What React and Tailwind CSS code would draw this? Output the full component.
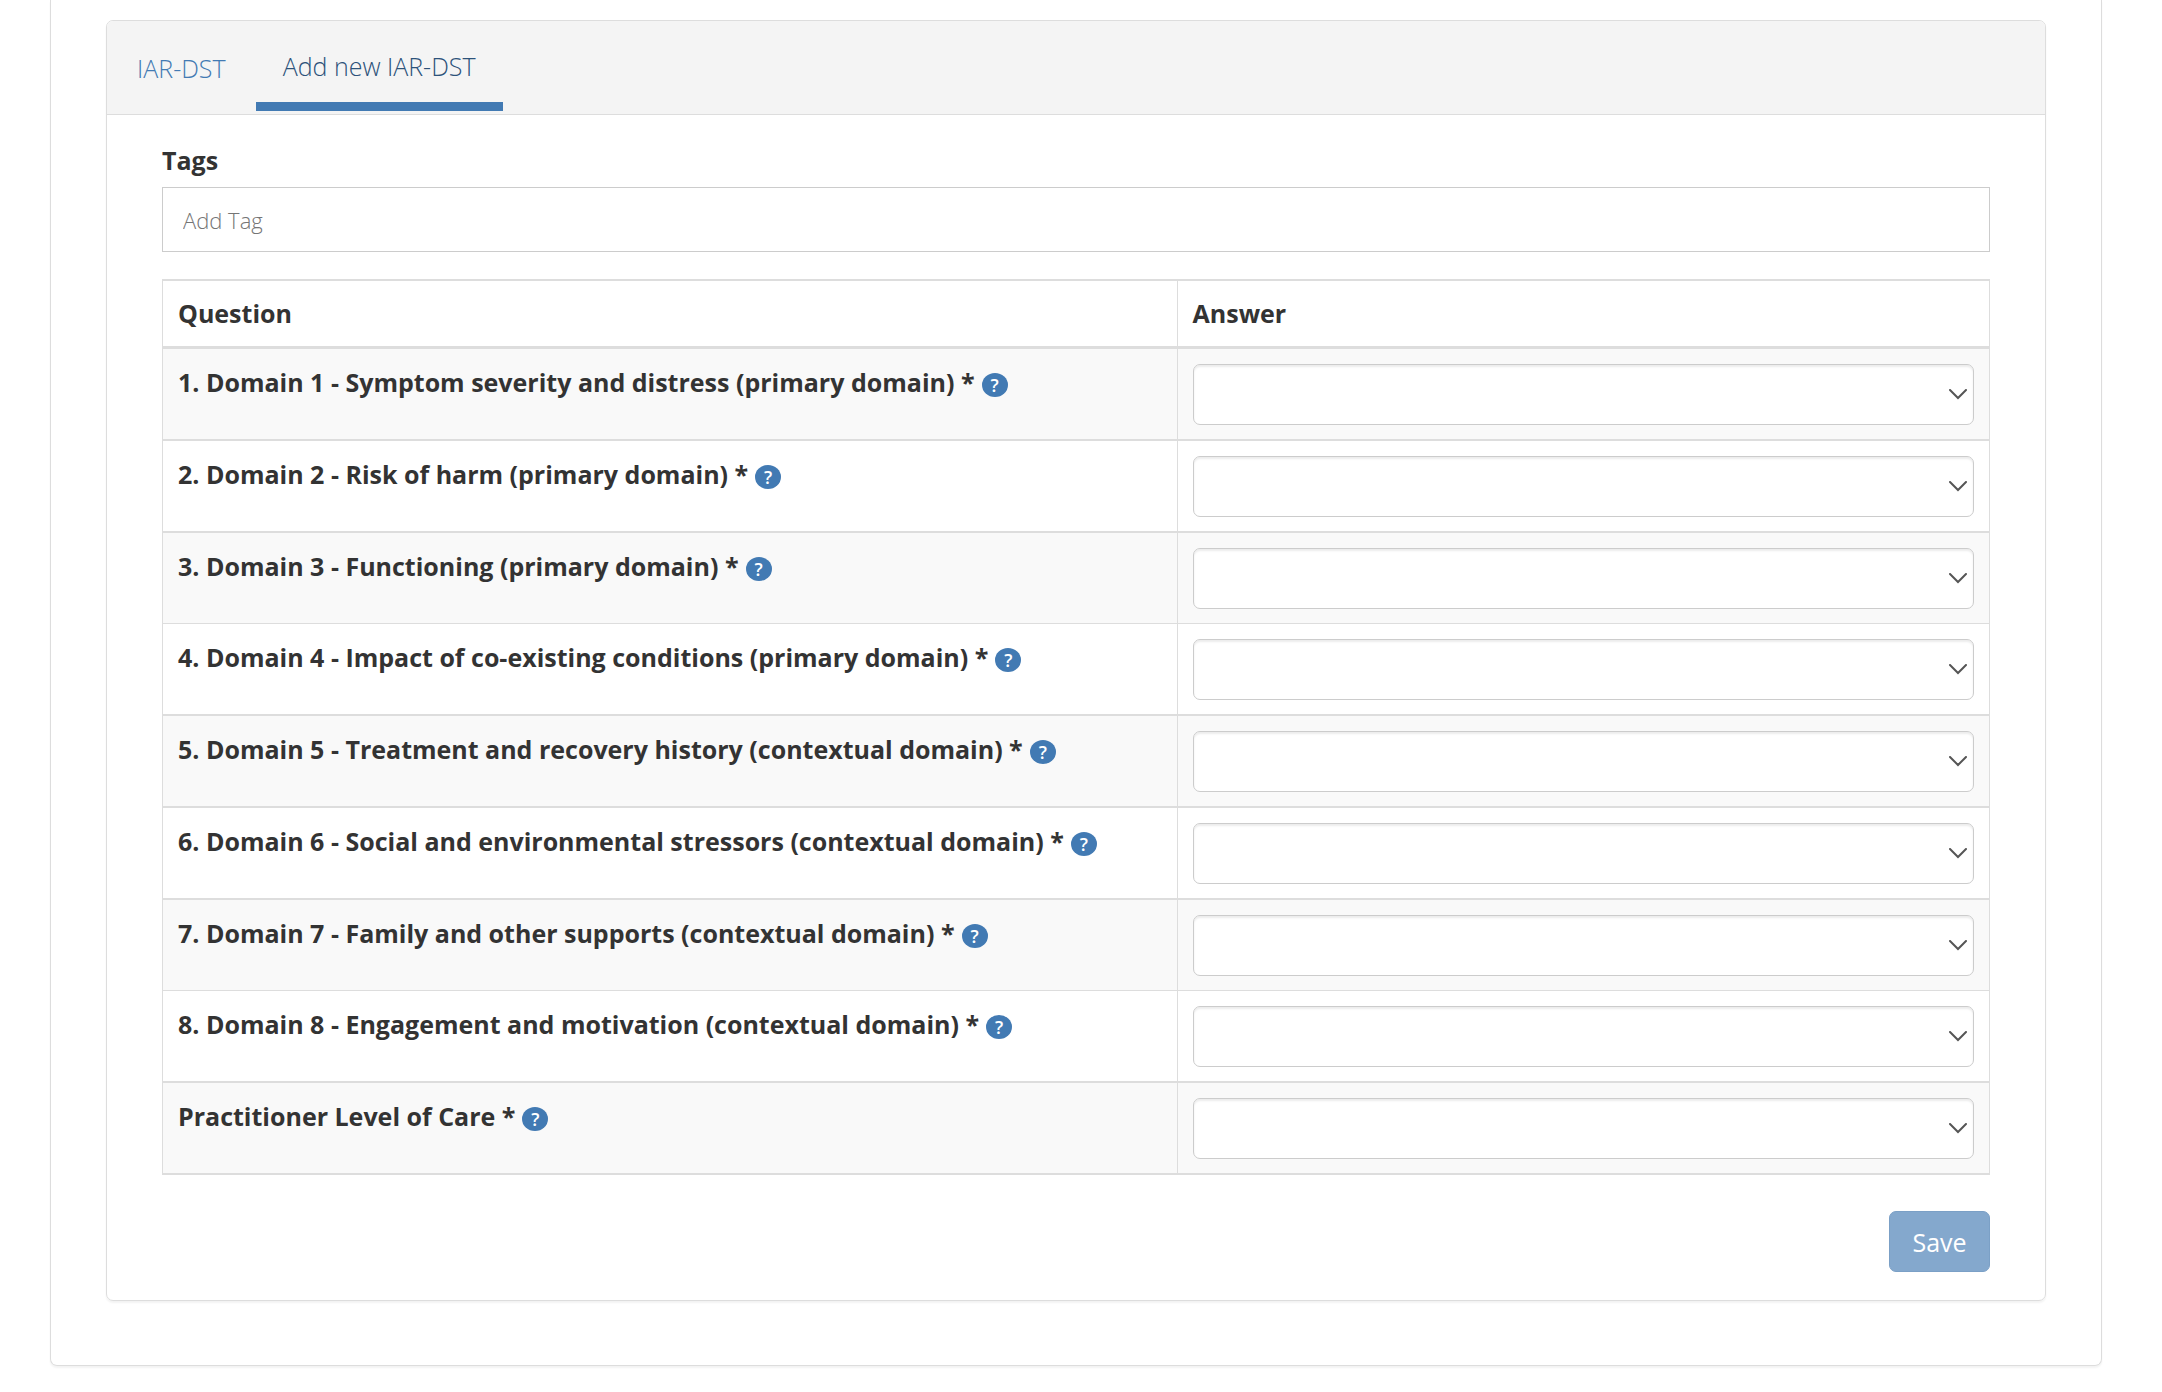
import { useState } from "react";

const questions = [
  { label: "1. Domain 1 - Symptom severity and distress (primary domain) *" },
  { label: "2. Domain 2 - Risk of harm (primary domain) *" },
  { label: "3. Domain 3 - Functioning (primary domain) *", thin: true },
  { label: "4. Domain 4 - Impact of co-existing conditions (primary domain) *" },
  { label: "5. Domain 5 - Treatment and recovery history (contextual domain) *" },
  { label: "6. Domain 6 - Social and environmental stressors (contextual domain) *" },
  { label: "7. Domain 7 - Family and other supports (contextual domain) *", thin: true },
  { label: "8. Domain 8 - Engagement and motivation (contextual domain) *" },
  { label: "Practitioner Level of Care *" },
];

function HelpButton({ topic }) {
  return (
    <button
      type="button"
      aria-label={`Help: ${topic}`}
      className="mt-[9px] inline-flex h-6 w-[26px] shrink-0 items-center justify-center rounded-[50%] bg-[#427ab3] text-[18px] leading-6 font-semibold text-white"
    >
      ?
    </button>
  );
}

function AnswerSelect({ id }) {
  return (
    <div className="relative">
      <select
        id={id}
        defaultValue=""
        className="block h-[61px] w-full appearance-none rounded-[7px] border border-[#ccc] bg-white px-6 text-[25px] shadow-[inset_0_2px_2px_rgba(0,0,0,0.075)]"
      >
        <option value=""></option>
      </select>
      <svg
        viewBox="0 0 18 11"
        className="pointer-events-none absolute top-[25px] right-[7px] h-[11px] w-[18px]"
        fill="none"
        stroke="#555"
        strokeWidth="2"
        aria-hidden="true"
      >
        <path d="M1 1 9 9 17 1" strokeLinecap="round" />
      </svg>
    </div>
  );
}

function QuestionRow({ question, index }) {
  const id = `answer-${index}`;
  const line = question.thin ? "border-b" : "border-b-2";
  return (
    <tr className="odd:bg-[#f9f9f9]">
      <th
        scope="row"
        className={`border-r border-l border-[#ddd] px-[15px] pt-[15px] text-left align-top font-bold ${line}`}
      >
        <div className="flex items-start gap-[7px]">
          <label htmlFor={id}>{question.label}</label>
          <HelpButton topic={question.label} />
        </div>
      </th>
      <td className={`border-r border-[#ddd] px-[15px] pt-[15px] pb-3.5 ${line}`}>
        <AnswerSelect id={id} />
      </td>
    </tr>
  );
}

export default function App() {
  const [tag, setTag] = useState("");

  return (
    <div className="min-h-screen bg-white pr-[60px] pb-6 pl-[50px] font-['Open_Sans',sans-serif] text-[25px] leading-9 text-[#333]">
      <main className="rounded-b-[7px] border border-t-0 border-[#ddd] px-[55px] pt-5 pb-16 shadow-[0_2px_2px_rgba(0,0,0,0.05)]">
        <section className="rounded-[7px] border border-[#ddd] shadow-[0_2px_2px_rgba(0,0,0,0.05)]">
          <nav className="flex h-[94px] items-start rounded-t-md border-b border-[#ddd] bg-[#f4f4f4] font-light">
            <a href="#list" className="px-[30px] pt-[29px] text-[#427ab3]">
              IAR-DST
            </a>
            <a
              href="#new"
              aria-current="page"
              className="border-b-[9px] border-[#427ab3] px-[27px] pt-[27px] pb-[18px] text-[#2c527a]"
            >
              Add new IAR-DST
            </a>
          </nav>
          <form className="px-[55px] pt-[27px] pb-7" onSubmit={(e) => e.preventDefault()}>
            <label htmlFor="tags" className="block pb-[9px] font-bold">
              Tags
            </label>
            <input
              id="tags"
              type="text"
              value={tag}
              onChange={(e) => setTag(e.target.value)}
              placeholder="Add Tag"
              className="block h-[65px] w-full border border-[#ccc] bg-white px-5 text-[22px] font-light placeholder:text-[#757575]"
            />
            <table className="mt-[27px] w-full table-fixed border-separate border-spacing-0">
              <thead>
                <tr className="text-left">
                  <th className="w-5/9 border-x border-t-2 border-b-[3px] border-[#ddd] px-[15px] pt-3.5 pb-[15px] font-bold">
                    Question
                  </th>
                  <th className="border-t-2 border-r border-b-[3px] border-[#ddd] px-[15px] pt-3.5 pb-[15px] font-bold">
                    Answer
                  </th>
                </tr>
              </thead>
              <tbody>
                {questions.map((q, i) => (
                  <QuestionRow key={q.label} question={q} index={i + 1} />
                ))}
              </tbody>
            </table>
            <div className="mt-9 flex justify-end">
              <button
                type="submit"
                className="h-[61px] min-w-[101px] rounded-[7px] border border-[#7ba0c6] bg-[#84a8cd] px-[22px] text-white"
              >
                Save
              </button>
            </div>
          </form>
        </section>
      </main>
    </div>
  );
}
